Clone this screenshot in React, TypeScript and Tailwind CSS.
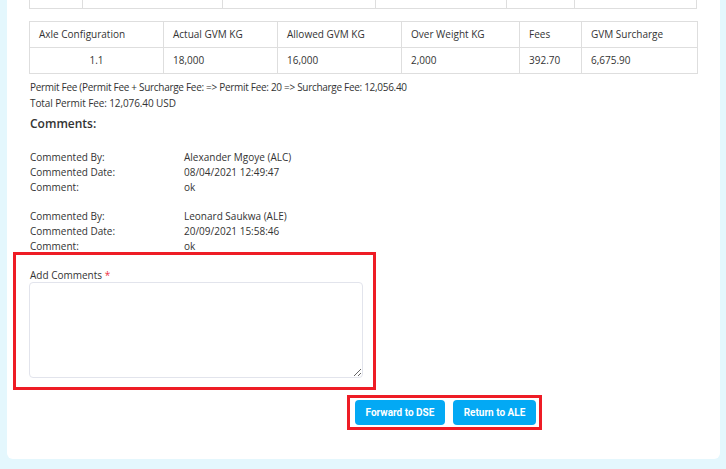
import React from 'react';

const topCols = [53, 140, 153, 131, 68, 123];

const axleCols = [
  { label: 'Axle Configuration', value: '1.1', w: 134, center: true },
  { label: 'Actual GVM KG', value: '18,000', w: 114 },
  { label: 'Allowed GVM KG', value: '16,000', w: 124 },
  { label: 'Over Weight KG', value: '2,000', w: 118 },
  { label: 'Fees', value: '392.70', w: 62 },
  { label: 'GVM Surcharge', value: '6,675.90', w: 116 },
];

const comments = [
  { by: 'Alexander Mgoye (ALC)', date: '08/04/2021 12:49:47', text: 'ok' },
  { by: 'Leonard Saukwa (ALE)', date: '20/09/2021 15:58:46', text: 'ok' },
];

const App: React.FC = () => {
  return (
    <div
      className="min-h-screen w-[726px] bg-[#e4f7fd] text-[10px] text-[#333]"
      style={{ fontFamily: '"Open Sans", "Liberation Sans", sans-serif' }}
    >
      <div className="ml-[7px] w-[713px] bg-white rounded-b-[6px] pl-[22px] pb-[29px]">
        {/* tail of the previous table */}
        <div className="flex h-[9px] w-[668px] border-b border-[#dedede]">
          {topCols.map((w, i) => (
            <div
              key={i}
              className={`h-full border-l border-[#dedede] ${i === topCols.length - 1 ? 'border-r' : ''}`}
              style={{ width: w }}
            />
          ))}
        </div>

        <table className="mt-[12px] w-[668px] border-collapse table-fixed">
          <colgroup>
            {axleCols.map((c) => (
              <col key={c.label} style={{ width: c.w }} />
            ))}
          </colgroup>
          <tbody>
            <tr className="h-[26px]">
              {axleCols.map((c) => (
                <td key={c.label} className="border border-[#dedede] px-[9px] text-left">
                  {c.label}
                </td>
              ))}
            </tr>
            <tr className="h-[26px]">
              {axleCols.map((c) => (
                <td
                  key={c.label}
                  className={`border border-[#dedede] px-[9px] ${c.center ? 'text-center' : 'text-left'}`}
                >
                  {c.value}
                </td>
              ))}
            </tr>
          </tbody>
        </table>

        <div className="mt-[5px] leading-[16px] pl-px">
          <div className="tracking-[-0.3px]">
            Permit Fee (Permit Fee + Surcharge Fee: =&gt; Permit Fee: 20 =&gt; Surcharge Fee: 12,056.40
          </div>
          <div className="tracking-[-0.1px]">Total Permit Fee: 12,076.40 USD</div>
        </div>

        <div className="mt-[5px] pl-px text-[12px] font-semibold leading-[16px]">Comments:</div>

        <div className="mt-[18px] pl-px">
          {comments.map((c, i) => (
            <div key={i} className={`leading-[15px] ${i > 0 ? 'mt-[14px]' : ''}`}>
              <div className="flex">
                <span className="w-[154px]">Commented By:</span>
                <span>{c.by}</span>
              </div>
              <div className="flex">
                <span className="w-[154px]">Commented Date:</span>
                <span>{c.date}</span>
              </div>
              <div className="flex">
                <span className="w-[154px]">Comment:</span>
                <span>{c.text}</span>
              </div>
            </div>
          ))}
        </div>

        <div className="-ml-[16px] mt-[-2px] w-[363px] border-[3px] border-[#ee1c25] pl-[13px] pt-[13px] pb-[9px]">
          <div className="pl-px leading-[14px]">
            Add Comments <span className="text-[#ee3344]">*</span>
          </div>
          <textarea className="mt-0 block h-[96px] w-[334px] rounded-[4px] border border-[#e2e4ec] bg-white outline-none" />
        </div>

        <div className="mt-[5px] ml-[318px] flex w-[195px] gap-[8px] border-[3px] border-[#ee1c25] pl-[5px] py-[2px]">
          <button
            className="h-[25px] w-[90px] rounded-[4px] bg-[#03a9f4] text-[10px] font-bold text-white"
            style={{ fontFamily: 'Roboto, "Liberation Sans", sans-serif' }}
          >
            Forward to DSE
          </button>
          <button
            className="h-[25px] w-[83px] rounded-[4px] bg-[#03a9f4] text-[10px] font-bold text-white"
            style={{ fontFamily: 'Roboto, "Liberation Sans", sans-serif' }}
          >
            Return to ALE
          </button>
        </div>
      </div>
    </div>
  );
};

export default App;
